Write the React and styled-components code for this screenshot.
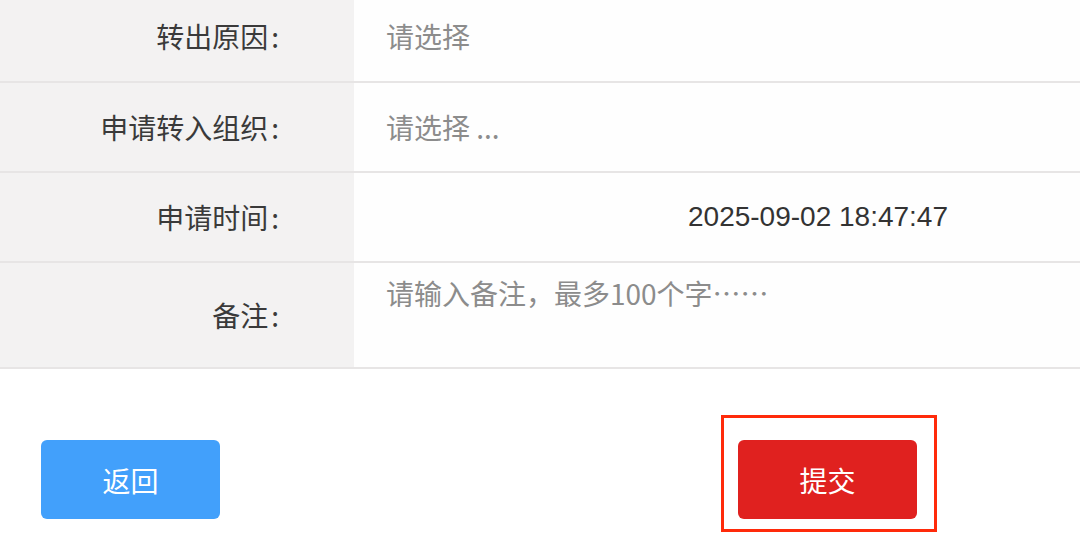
import React from "react";
import styled, { createGlobalStyle } from "styled-components";

const Global = createGlobalStyle`
  html, body { margin: 0; padding: 0; background: #ffffff; }
  body {
    font-family: "Liberation Sans", "Noto Sans CJK SC", sans-serif;
    width: 1080px;
    height: 537px;
    overflow: hidden;
  }
`;

const Page = styled.div`
  width: 1080px;
  margin-top: -9px;
  display: flex;
  flex-direction: column;
`;

const Form = styled.div`
  display: flex;
  flex-direction: column;
`;

const Row = styled.div`
  display: grid;
  grid-template-columns: 354px 1fr;
  height: ${(p) => p.$h}px;
  border-bottom: 2px solid #e7e5e5;
`;

const Label = styled.div`
  background: #f3f2f2;
  display: flex;
  align-items: center;
  justify-content: flex-end;
  padding-right: 75px;
  font-size: 28px;
  color: #3a3a3a;
  font-family: "Noto Sans CJK SC", sans-serif;
`;

const Colon = styled.span`
  margin-left: 3px;
`;

const Value = styled.div`
  background: #fefefe;
  display: flex;
  align-items: ${(p) => (p.$top ? "flex-start" : "center")};
  padding-left: ${(p) => p.$pl || 32}px;
  padding-top: ${(p) => (p.$top ? 10 : 0)}px;
  font-size: 28px;
  color: ${(p) => (p.$date ? "#333333" : "#8c8c8c")};
  font-family: ${(p) =>
    p.$date
      ? `"Liberation Sans", Arial, sans-serif`
      : `"Noto Sans CJK SC", sans-serif`};
`;

const Footer = styled.div`
  display: flex;
  justify-content: space-between;
  padding: 71px 163px 0 41px;
`;

const Button = styled.button`
  width: 179px;
  height: 79px;
  border: none;
  border-radius: 6px;
  background: ${(p) => p.$bg};
  color: #ffffff;
  font-size: 28px;
  font-family: "Noto Sans CJK SC", sans-serif;
  display: flex;
  align-items: center;
  justify-content: center;
  padding: 0;
  cursor: pointer;
`;

const Highlight = styled.div`
  position: relative;
`;

const Frame = styled.div`
  position: absolute;
  top: -25px;
  left: -17px;
  right: -20px;
  bottom: -13px;
  border: 3px solid #ff2a0a;
  pointer-events: none;
`;

const Field = ({ label, children, ...rest }) => (
  <Row {...rest}>
    <Label>
      {label}
      <Colon>:</Colon>
    </Label>
    {children}
  </Row>
);

export default function App() {
  return (
    <>
      <Global />
      <Page>
        <Form>
          <Field $h={90} label="转出原因">
            <Value>请选择</Value>
          </Field>
          <Field $h={88} label="申请转入组织">
            <Value>请选择 ...</Value>
          </Field>
          <Field $h={88} label="申请时间">
            <Value $date $pl={334}>2025-09-02 18:47:47</Value>
          </Field>
          <Field $h={104} label="备注">
            <Value $top>请输入备注，最多100个字……</Value>
          </Field>
        </Form>
        <Footer>
          <Button $bg="#42a0fb">返回</Button>
          <Highlight>
            <Button $bg="#e0211f">提交</Button>
            <Frame />
          </Highlight>
        </Footer>
      </Page>
    </>
  );
}
